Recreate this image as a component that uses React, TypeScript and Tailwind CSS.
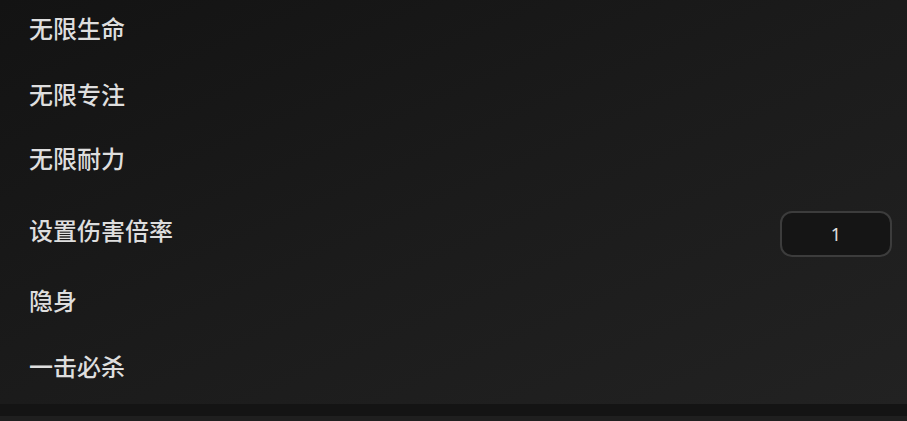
import { useState } from "react";

const rows = [
  { label: "无限生命", mt: "mt-[4px]" },
  { label: "无限专注", mt: "mt-[18px]" },
  { label: "无限耐力", mt: "mt-[16px]" },
  { label: "设置伤害倍率", mt: "mt-[24px]", input: true },
  { label: "隐身", mt: "mt-[22px]" },
  { label: "一击必杀", mt: "mt-[18px]" },
];

export default function App() {
  const [rate, setRate] = useState("1");

  return (
    <div className="flex h-[421px] w-[907px] flex-col overflow-hidden bg-[#1f1f1f] font-['Noto_Sans_CJK_SC','Noto_Sans',sans-serif]">
      <div className="flex h-[404px] flex-col bg-gradient-to-br from-[#131313] via-[#1b1b1b] to-[#222222]">
        {rows.map((r) => (
          <div key={r.label} className={`flex h-[48px] shrink-0 items-center justify-between pl-[29px] pr-[15px] ${r.mt}`}>
            <span className="text-[24px] font-medium leading-none text-[#dedede]">{r.label}</span>
            {r.input && (
              <input
                value={rate}
                onChange={(e) => setRate(e.target.value)}
                className="mt-[8px] h-[46px] w-[112px] rounded-[12px] border-2 border-[#3c3c3c] bg-[#151515] text-center font-['Noto_Sans','Liberation_Sans',sans-serif] text-[18px] text-[#e0e0e0] outline-none"
              />
            )}
          </div>
        ))}
      </div>
      <div className="h-[12px] bg-[#141414]" />
    </div>
  );
}
